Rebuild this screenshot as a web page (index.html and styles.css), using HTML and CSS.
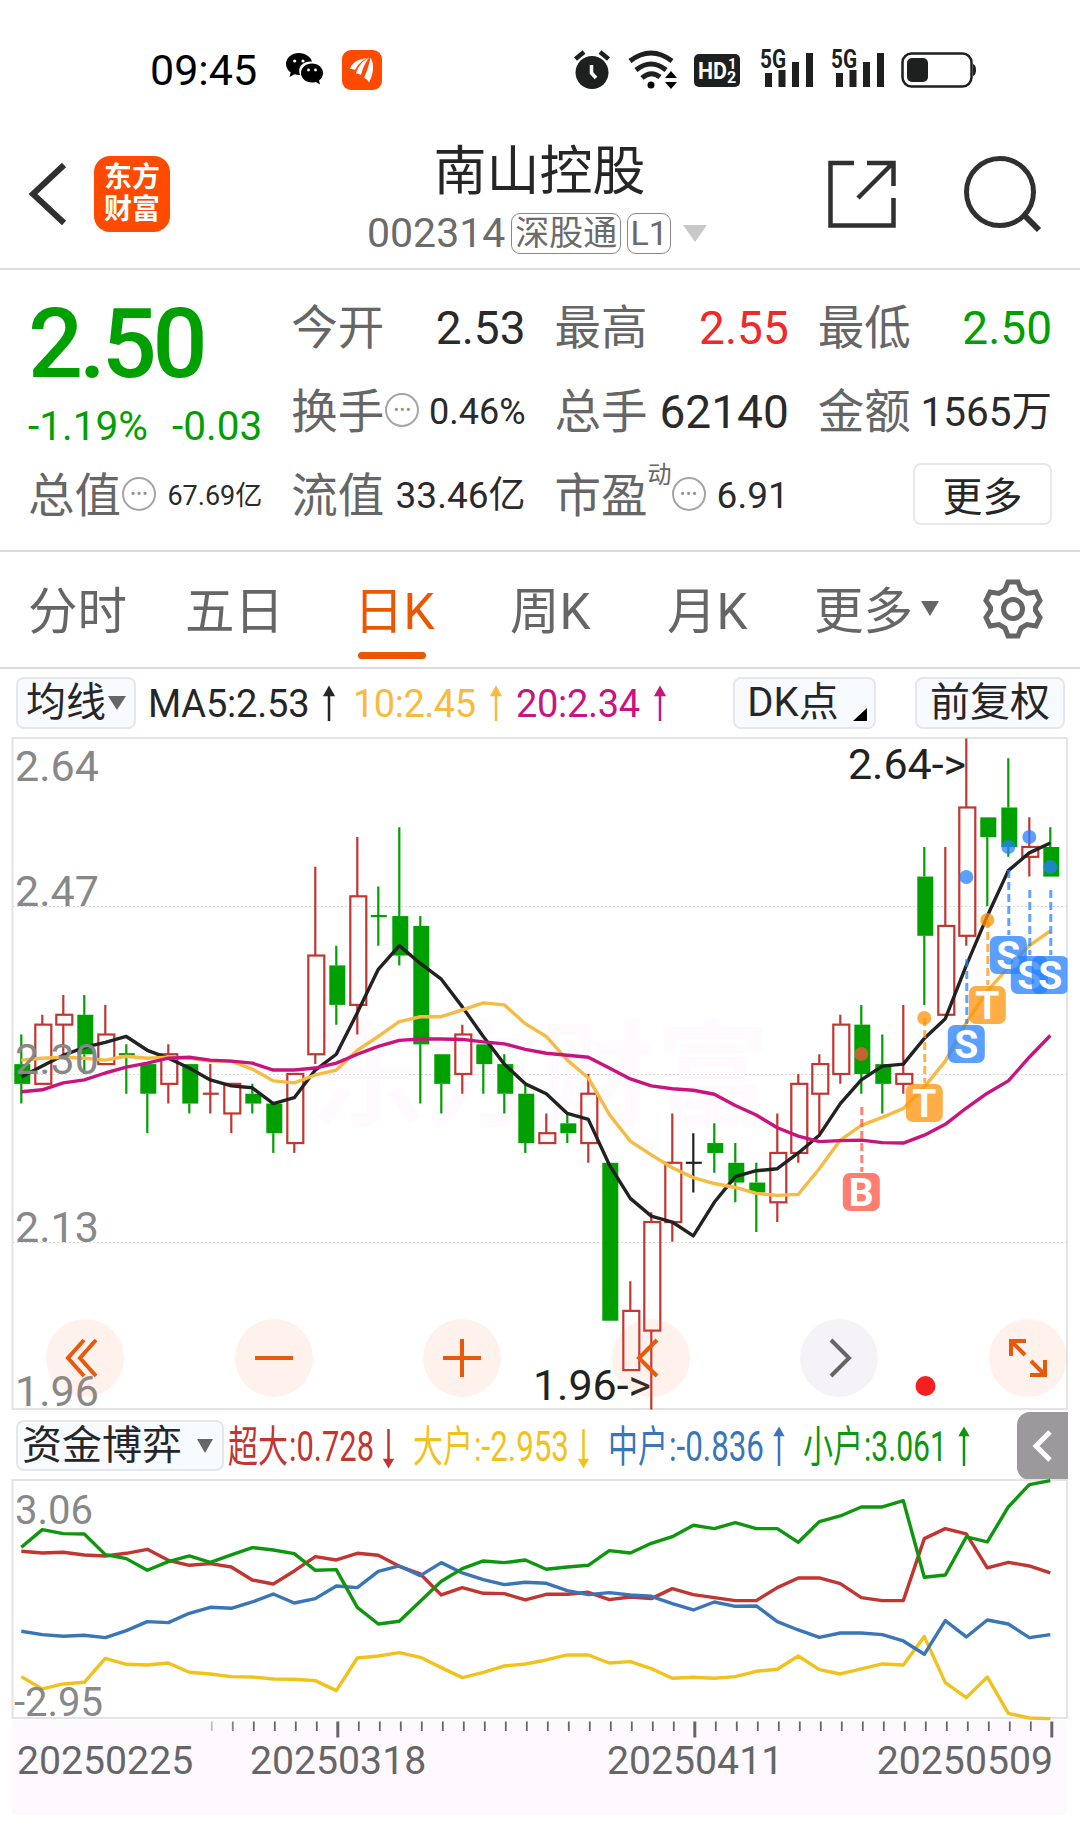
FILE: index.html
```html
<!DOCTYPE html>
<html lang="zh-CN">
<head>
    <meta charset="UTF-8">
    <meta name="viewport" content="width=device-width, initial-scale=1.0">
    <title>南山控股 002314</title>
    <link rel="stylesheet" href="styles.css">
</head>
<body>
    <!-- Status bar -->
    <div class="status-bar">
        <div class="status-left">
            <span class="clock">09:45</span>
            <svg class="wechat" width="38" height="34" viewBox="0 0 38 34">
                <path d="M13 0C5.800 0 0 4.900 0 11c0 3.500 1.800 6.500 4.700 8.500L3.500 24l5-2.700c1.300.4 2.900.6 4.500.6h1C11 14 17 8 26 8.600 24.600 3.500 19.300 0 13 0z"/>
                <path d="M26 10.500c-6.200 0-11 4.200-11 9.500s4.800 9.500 11 9.500c1.400 0 2.700-.2 3.900-.6l4.100 2.600-1-4c2.500-1.700 4-4.400 4-7.500 0-5.300-4.800-9.500-11-9.500z"/>
                <g fill="#fff"><circle cx="8.700" cy="8" r="1.600"/><circle cx="17" cy="8" r="1.600"/><circle cx="22.500" cy="17" r="1.400"/><circle cx="29.500" cy="17" r="1.400"/></g>
            </svg>
            <svg width="40" height="40" viewBox="0 0 40 40">
                <rect width="40" height="40" rx="9" fill="#ff4a00"/>
                <g fill="#fff"><path d="M8 19C10 12 17 9 25 8c-5 3-9 6-12 12-2-1-3-1-5-1z"/><path d="M14 23.500C16 16 21 11 27 7.500c-4 6-6 10-8 17.500-2-1-3-1.500-5-1.500z"/><path d="M22 28C25 21 27 15 28.500 7.500 33 15 31 25 27 32.500c-1-2-2.500-4-5-4.500z"/></g>
            </svg>
        </div>
        <div class="status-right">
            <svg width="36" height="40" viewBox="0 0 36 40">
                <circle cx="18" cy="22.500" r="16.500" fill="#1d201e"/>
                <path d="M1.500 9l8.500-7M34.500 9L26 2" stroke="#1d201e" stroke-width="4.500"/>
                <path d="M17.500 15v8l4.500 5" fill="none" stroke="#fff" stroke-width="3.500"/>
            </svg>
            <svg class="wifi" width="50" height="40" viewBox="0 0 50 40">
                <g fill="none" stroke="#1d201e" stroke-width="5"><path d="M2 11Q23-5 44 11"/><path d="M8 20Q23 8 38 20"/><path d="M14 28Q23 20 32 27"/></g>
                <circle cx="23" cy="35" r="3.500"/>
                <path d="M43 21l6 7H37zM43 39l6-7H37z"/>
            </svg>
            <svg class="hd" width="46" height="33" viewBox="0 0 46 33">
                <rect width="46" height="33" rx="5" fill="#1d201e"/>
                <text x="4" y="25" font-size="24" textLength="29" lengthAdjust="spacingAndGlyphs">HD</text>
                <text x="34" y="15" font-size="15">1</text>
                <text x="33" y="29" font-size="16">2</text>
            </svg>
            <svg class="signal" width="54" height="38" viewBox="0 0 54 38">
                <text x="0" y="19" textLength="26" lengthAdjust="spacingAndGlyphs">5G</text>
                <path d="M5 24h7v14H5zM18.500 21h7v17h-7zM32 13h7v25h-7zM46 4h7v34h-7z"/>
            </svg>
            <svg class="signal signal-2" width="54" height="38" viewBox="0 0 54 38">
                <text x="0" y="19" textLength="26" lengthAdjust="spacingAndGlyphs">5G</text>
                <path d="M5 24h7v14H5zM18.500 21h7v17h-7zM32 13h7v25h-7zM46 4h7v34h-7z"/>
            </svg>
            <svg class="battery" width="76" height="36" viewBox="0 0 76 36">
                <rect x="1.500" y="1.500" width="69" height="33" rx="9" fill="none" stroke="#1d201e" stroke-width="2.500"/>
                <rect x="6" y="6" width="21" height="24" rx="5" fill="#1d201e"/>
                <path d="M72 12q3 1 3 6t-3 6z" fill="#1d201e"/>
            </svg>
        </div>
    </div>

    <!-- Title bar -->
    <div class="header">
        <div class="header-side">
            <svg width="38" height="62" viewBox="0 0 38 62"><path d="M35 2L4 31l31 29" fill="none" stroke="#303030" stroke-width="6"/></svg>
            <div class="brand"><span>东方</span><span>财富</span></div>
        </div>
        <div class="header-title">
            <div class="stock-name">南山控股</div>
            <div class="stock-code">
                <span>002314</span>
                <span class="code-tag">深股通</span>
                <span class="code-tag code-tag-sm">L1</span>
                <svg class="code-arrow" width="24" height="17"><path d="M0 0h24L12 17z" fill="#c8c8c8"/></svg>
            </div>
        </div>
        <div class="header-side header-actions">
            <svg width="68" height="68" viewBox="0 0 68 68"><path d="M26 3H2.500v62.500h63V38M39 3h26.500v23M65 3L30 38" fill="none" stroke="#303030" stroke-width="4.500"/></svg>
            <svg width="78" height="76" viewBox="0 0 78 76"><circle cx="36" cy="36" r="33.500" fill="none" stroke="#303030" stroke-width="5"/><path d="M59 58l16 16" stroke="#303030" stroke-width="6"/></svg>
        </div>
    </div>

    <!-- Quote -->
    <div class="quote">
        <div class="price-box">
            <div class="price">2.50</div>
            <div class="change"><span>-1.19%</span><span>-0.03</span></div>
        </div>
        <div class="cell"><span class="label">今开</span><span class="value">2.53</span></div>
        <div class="cell"><span class="label">最高</span><span class="value up">2.55</span></div>
        <div class="cell"><span class="label">最低</span><span class="value down">2.50</span></div>
        <div class="cell"><span class="label">换手<i class="info">•••</i></span><span class="value v-pct">0.46%</span></div>
        <div class="cell"><span class="label">总手</span><span class="value">62140</span></div>
        <div class="cell"><span class="label">金额</span><span class="value v-lg">1565万</span></div>
        <div class="cell"><span class="label">总值<i class="info">•••</i></span><span class="value v-sm">67.69亿</span></div>
        <div class="cell"><span class="label">流值</span><span class="value v-md">33.46亿</span></div>
        <div class="cell"><span class="label">市盈<sup>动</sup><i class="info">•••</i></span><span class="value v-md">6.91</span></div>
        <div class="cell cell-more"><button class="more-btn">更多</button></div>
    </div>

    <!-- Period tabs -->
    <div class="tabs">
        <span class="tab">分时</span>
        <span class="tab">五日</span>
        <span class="tab active">日K</span>
        <span class="tab">周K</span>
        <span class="tab">月K</span>
        <span class="tab tab-more">更多<svg width="18" height="15"><path d="M0 0h18L9 15z" fill="#666"/></svg></span>
        <svg class="gear" width="58" height="60" viewBox="1 0 58 60">
            <path d="M25 3h10l3 8 6 3.500 9-1.500 4 8.500-4.500 7v3l4.500 7-4 8.500-9-1.500-6 3.500-3 8H25l-3-8-6-3.500-9 1.500-4-8.500 4.500-7v-3L3 21.500 7 13l9 1.500 6-3.500z"/>
            <circle cx="30" cy="30" r="9.500"/>
        </svg>
    </div>

    <!-- Moving averages -->
    <div class="ma-bar">
        <button class="pill pill-ma">均线<svg width="18" height="14"><path d="M0 0h18L9 14z" fill="#666"/></svg></button>
        <span class="ma ma-5">MA5:2.53<svg class="arrow" width="10" height="36"><path d="M5 35V6M1 9L5 2l4 7z"/></svg></span>
        <span class="ma ma-10">10:2.45<svg class="arrow" width="10" height="36"><path d="M5 35V6M1 9L5 2l4 7z"/></svg></span>
        <span class="ma ma-20">20:2.34<svg class="arrow" width="10" height="36"><path d="M5 35V6M1 9L5 2l4 7z"/></svg></span>
        <button class="pill pill-dk">DK点<svg width="14" height="13"><path d="M14 0v13H0z"/></svg></button>
        <button class="pill pill-fq">前复权</button>
    </div>

    <!-- K-line chart -->
    <div class="kline">
        <svg id="kline" width="1080" height="674" viewBox="0 736 1080 674"></svg>
        <div class="tools">
            <span class="tool"><svg width="40" height="40"><path d="M19 2L3 20l16 18M31 2L15 20l16 18"/></svg></span>
            <span class="tool"><svg width="40" height="40"><path d="M1 20h38"/></svg></span>
            <span class="tool"><svg width="40" height="40"><path d="M1 20h38M20 1v38"/></svg></span>
            <span class="tool"><svg width="40" height="40"><path d="M26 2L8 20l18 18"/></svg></span>
            <span class="tool tool-off"><svg width="40" height="40"><path d="M12 2l18 18-18 18"/></svg></span>
            <span class="tool"><svg width="40" height="40"><path d="M18 3H3v15M3 3l14 14M37 22v15H22M37 37L23 23"/></svg></span>
        </div>
    </div>

    <!-- Fund flow -->
    <div class="fund-bar">
        <button class="pill pill-fund">资金博弈<svg width="16" height="14"><path d="M0 0h16L8 14z" fill="#666"/></svg></button>
        <svg class="fund-values" width="790" height="70" viewBox="226 1410 790 70">
            <g fill="#c23531" stroke="#c23531">
                <text x="228" y="1461" textLength="60" lengthAdjust="spacingAndGlyphs">超大</text>
                <text x="289" y="1460" textLength="85" lengthAdjust="spacingAndGlyphs">:0.728</text>
                <path d="M388.500 1428v31M385 1459l3.500 6 3.500-6z"/>
            </g>
            <g fill="#f2c21c" stroke="#f2c21c">
                <text x="413" y="1461" textLength="60" lengthAdjust="spacingAndGlyphs">大户</text>
                <text x="474" y="1460" textLength="95" lengthAdjust="spacingAndGlyphs">:-2.953</text>
                <path d="M583.500 1428v31M580 1459l3.500 6 3.500-6z"/>
            </g>
            <g fill="#3a75b8" stroke="#3a75b8">
                <text x="608" y="1461" textLength="60" lengthAdjust="spacingAndGlyphs">中户</text>
                <text x="669" y="1460" textLength="95" lengthAdjust="spacingAndGlyphs">:-0.836</text>
                <path d="M779 1465v-31M775.500 1434l3.500-6 3.500 6z"/>
            </g>
            <g fill="#0f960f" stroke="#0f960f">
                <text x="803" y="1461" textLength="60" lengthAdjust="spacingAndGlyphs">小户</text>
                <text x="864" y="1460" textLength="83" lengthAdjust="spacingAndGlyphs">:3.061</text>
                <path d="M964 1465v-31M960.500 1434l3.500-6 3.500 6z"/>
            </g>
        </svg>
        <div class="drawer"><svg width="20" height="32"><path d="M17 2L3 16l14 14" fill="none" stroke="#fff" stroke-width="5"/></svg></div>
    </div>
    <svg id="fund" class="fund" width="1080" height="241" viewBox="0 1479 1080 241"></svg>

    <!-- Date axis -->
    <div class="axis">
        <svg id="ticks" width="1055" height="18" viewBox="12 1720 1055 18"></svg>
        <div class="dates"><span>20250225</span><span>20250318</span><span>20250411</span><span>20250509</span></div>
    </div>
    <script src="script.js"></script>
</body>
</html>
```
FILE: styles.css
```css
* {
    box-sizing: border-box;
}

body {
    margin: 0;
    width: 1080px;
    height: 1831px;
    overflow: hidden;
    background: #fff;
    color: #262626;
    font-family: Roboto, "Noto Sans CJK SC", sans-serif;
}

svg {
    display: block;
    flex: none;
    overflow: visible;
}

button {
    font-family: inherit;
    color: inherit;
    padding: 0;
}

/* Status bar */
.status-bar {
    height: 140px;
    padding: 0 103px 0 150px;
    display: flex;
    justify-content: space-between;
    align-items: center;
}

.status-left,
.status-right {
    display: flex;
    align-items: center;
}

.clock {
    width: 136px;
    font-size: 43px;
    line-height: 50px;
    color: #000;
}

.wechat {
    margin-right: 18px;
}

.wifi {
    margin: 0 16px 0 18px;
}

.hd {
    margin-right: 20px;
}

.hd text {
    fill: #fff;
    font-weight: 700;
}

.signal {
    margin: -4px 17px 0 0;
    fill: #1d201e;
}

.signal-2 {
    margin-right: 16px;
}

.signal text {
    font-size: 25px;
    font-weight: 700;
}

/* Header */
.header {
    height: 130px;
    padding: 0 38px 0 29px;
    display: flex;
    justify-content: space-between;
    border-bottom: 2px solid #dcdcdc;
}

.header-side {
    width: 253px;
    height: 108px;
    display: flex;
    align-items: center;
}

.brand {
    width: 76px;
    height: 76px;
    margin-left: 27px;
    border-radius: 16px;
    background: #ff4a00;
    color: #fff;
    font-size: 28px;
    font-weight: 700;
    line-height: 32px;
    display: flex;
    flex-direction: column;
    align-items: center;
    justify-content: center;
}

.header-title {
    width: 345px;
}

.stock-name {
    height: 62px;
    padding-top: 1px;
    font-size: 53px;
    line-height: 62px;
    text-align: center;
}

.stock-code {
    height: 62px;
    display: flex;
    align-items: center;
    color: #6b6b6b;
    font-size: 41px;
    line-height: 46px;
}

.code-tag {
    flex: none;
    width: 110px;
    height: 41px;
    margin-left: 6px;
    border: 1.500px solid #888;
    border-radius: 9px;
    font-size: 34px;
    line-height: 38px;
    text-align: center;
}

.code-tag-sm {
    width: 44px;
}

.code-arrow {
    margin-left: 12px;
}

.header-actions {
    width: 245px;
    justify-content: flex-end;
    gap: 68px;
}

/* Quote */
.quote {
    height: 282px;
    padding: 16px 28px 0;
    display: grid;
    grid-template-columns: repeat(4, 1fr);
    grid-template-rows: repeat(3, 84px);
    column-gap: 29px;
    border-bottom: 2px solid #dcdce0;
}

.price-box {
    grid-row: span 2;
    color: #00a000;
}

.price {
    height: 112px;
    padding-top: 2px;
    font-size: 97px;
    font-weight: 500;
    line-height: 112px;
    letter-spacing: -4.200px;
    white-space: nowrap;
}

.change {
    display: flex;
    justify-content: space-between;
    padding-top: 1px;
    font-size: 40.500px;
    line-height: 54px;
}

.cell {
    display: flex;
    align-items: center;
    justify-content: space-between;
    white-space: nowrap;
}

.label {
    display: flex;
    align-items: center;
    font-size: 46.500px;
    line-height: 60px;
    color: #666;
}

.label sup {
    height: 66px;
    font-size: 24px;
    line-height: 24px;
}

.info {
    width: 34px;
    height: 34px;
    margin: -5px 0 0 1px;
    border: 2.500px solid #a5a5a5;
    border-radius: 50%;
    color: #909090;
    font-size: 15px;
    font-style: normal;
    line-height: 30px;
    letter-spacing: 1px;
    text-indent: 1px;
    text-align: center;
}

.label sup + .info {
    margin-left: 0;
}

.value {
    font-size: 46px;
    line-height: 60px;
    color: #2a2a2a;
}

.value.up {
    color: #ee2a2a;
}

.value.down {
    color: #00a000;
}

.v-lg {
    font-size: 40.500px;
}

.v-md {
    font-size: 37px;
}

.v-pct {
    font-size: 36px;
}

.v-sm {
    font-size: 27px;
}

.cell-more {
    justify-content: flex-end;
}

.more-btn {
    width: 139px;
    height: 62px;
    margin-top: -4px;
    padding-bottom: 5px;
    border: 2px solid #e8e8e8;
    border-radius: 8px;
    background: #fff;
    font-size: 40px;
}

/* Tabs */
.tabs {
    height: 117px;
    padding: 5px 40px 0 28px;
    display: flex;
    align-items: center;
    border-bottom: 2px solid #dcdcdc;
    color: #666;
    font-size: 49.500px;
    line-height: 94px;
}

.tab {
    width: 157px;
    flex: none;
}

.tab:nth-child(2) {
    width: 169px;
}

.tab.active {
    width: 156px;
    color: #eb5600;
}

.tab.active::after {
    content: "";
    display: block;
    width: 68px;
    height: 7px;
    margin: -7px 0 0 4px;
    border-radius: 4px;
    background: #eb5600;
}

.tab-more {
    width: 170px;
    margin-left: -10px;
    display: flex;
    align-items: center;
}

.tab-more svg {
    margin: -7px 0 0 8px;
}

.gear {
    margin: -6px 0 0 auto;
    fill: none;
    stroke: #666;
    stroke-width: 5;
}

/* Toolbar above the chart */
.ma-bar {
    height: 67px;
    padding: 1px 15px 0 16px;
    display: flex;
    align-items: center;
}

.pill {
    flex: none;
    display: flex;
    align-items: center;
    justify-content: center;
    height: 52px;
    border: 2px solid #e4e8ee;
    border-radius: 8px;
    background: #f7faff;
    font-size: 40px;
    line-height: 48px;
    white-space: nowrap;
}

.pill-ma {
    width: 120px;
    margin-right: 12px;
}

.pill-ma svg {
    margin-left: 2px;
}

.ma {
    display: flex;
    align-items: center;
    width: 205px;
    padding-top: 2px;
    font-size: 38px;
    white-space: nowrap;
    letter-spacing: -0.200px;
    fill: currentColor;
}

.arrow {
    margin-left: 15px;
    stroke: currentColor;
    stroke-width: 2.500;
}

.ma-10 {
    width: 163px;
    color: #f8bb40;
    letter-spacing: -0.500px;
}

.ma-20 {
    width: 217px;
    color: #c9147f;
    letter-spacing: -0.300px;
}

.pill-dk {
    width: 143px;
    padding-left: 5px;
}

.pill-dk svg {
    margin: 22px 0 0 14px;
}

.pill-fq {
    width: 150px;
    margin-left: auto;
}

/* K-line */
.kline {
    position: relative;
    height: 674px;
}

.frame {
    fill: none;
    stroke: #e3e3e3;
    stroke-width: 2;
}

.grid-line {
    stroke: #ddd;
    stroke-width: 1;
    stroke-dasharray: 2 2;
}

.watermark {
    font-size: 115px;
    font-weight: 700;
    fill: #fefafe;
}

.scale-text {
    font-size: 43px;
    fill: #888;
}

.peak-text {
    font-size: 43px;
    fill: #222;
}

.line {
    fill: none;
    stroke-width: 3.400;
    stroke-linejoin: round;
}

.badge-text {
    font-size: 39px;
    font-weight: 700;
    fill: #fff;
    text-anchor: middle;
}

/* Floating controls on top of the chart */
.tools {
    position: absolute;
    left: 46px;
    bottom: 13px;
    width: 1021px;
    display: flex;
    justify-content: space-between;
}

.tool {
    width: 78px;
    height: 78px;
    border-radius: 50%;
    background: rgba(255, 115, 70, 0.1);
    display: flex;
    align-items: center;
    justify-content: center;
}

.tool svg {
    fill: none;
    stroke: #e8590c;
    stroke-width: 4;
}

.tool-off {
    background: rgba(90, 50, 120, 0.06);
}

.tool-off svg {
    stroke: #666;
}

/* Fund flow */
.fund-bar {
    height: 69px;
    padding: 2px 12px 0 16px;
    display: flex;
    align-items: center;
}

.pill-fund {
    width: 208px;
    height: 51px;
    margin-right: 2px;
    padding-right: 5px;
}

.pill-fund svg {
    margin-left: 15px;
}

.fund-values text {
    font-size: 43px;
    stroke: none;
}

.fund-values path {
    stroke-width: 2.500;
}

.drawer {
    width: 51px;
    height: 68px;
    margin-left: auto;
    border-radius: 13px 0 0 13px;
    background: #9b999c;
    display: flex;
    align-items: center;
    justify-content: center;
}

.fund .scale-text {
    font-size: 40px;
}

/* Date axis */
.axis {
    width: 1055px;
    height: 95px;
    margin-left: 12px;
    background: #fef9fe;
}

.dates {
    display: flex;
    padding: 0 14px 0 5px;
    color: #666;
    font-size: 39.200px;
    line-height: 46px;
}

.dates span {
    width: 233px;
}

.dates span:nth-child(2) {
    width: 357px;
}

.dates span:last-child {
    width: auto;
    margin-left: auto;
}
```
FILE: script.js
```javascript
// [open, close, high, low] in cents
const candles = [
    [231, 229, 234, 227], [229, 235, 236, 229], [235, 236, 238, 232], [236, 232, 238, 230], [231, 234, 237, 231],
    [232, 232, 233, 228], [231, 228, 231, 224], [229, 232, 233, 227], [231, 227, 231, 226], [228, 228, 231, 226],
    [226, 229, 229, 224], [228, 227, 229, 226], [227, 224, 227, 222], [223, 230, 230, 222], [232, 242, 251, 231],
    [241, 237, 243, 235], [237, 248, 254, 234], [246, 246, 249, 243], [246, 242, 255, 241], [245, 233, 246, 227],
    [232, 229, 232, 226], [230, 234, 235, 228], [233, 231, 233, 228], [231, 228, 232, 226], [228, 223, 229, 222],
    [223, 224, 226, 223], [225, 224, 226, 223], [223, 228, 230, 221], [221, 205, 221, 205], [200, 206, 209, 200],
    [204, 215, 216, 196], [215, 221, 226, 213], [221, 221, 224, 218], [223, 222, 225, 220], [221, 219, 223, 217],
    [219, 218, 221, 214], [217, 222, 226, 215], [222, 229, 230, 221], [228, 231, 232, 224], [230, 235, 236, 229],
    [235, 230, 237, 228], [231, 229, 234, 226], [229, 230, 237, 228], [250, 244, 253, 237], [236, 245, 253, 236],
    [244, 257, 264, 243], [256, 254, 256, 247], [257, 253, 262, 252], [252, 253, 256, 250], [253, 250, 255, 250]
];

// averages for the days before the window is full
const seed = {
    5: [229.7, 230.8, 231.9, 232.7],
    10: [231.4, 231.6, 231.7, 231.6, 231.4, 231.8, 231.6, 231.7, 231.6],
    20: [228.2, 228.4, 229.1, 229.4, 230.1, 230.7, 231.1, 231.6, 231.7, 231.4, 231.3, 231.1, 230.4, 230.4, 230.6, 231.1, 232, 232.8, 233.4]
};

// fund curves, in thirds of a pixel
const funds = {
    '#c23531': [243, 248, 246, 254, 257, 249, 237, 270, 285, 280, 290, 329, 341, 302, 259, 269, 249, 255, 288, 311, 374, 352, 369, 370, 389, 372, 372, 366, 388, 380, 385, 355, 373, 382, 391, 391, 352, 323, 323, 340, 382, 391, 391, 205, 175, 191, 293, 276, 287, 308],
    '#f2c21c': [619, 656, 641, 636, 564, 582, 584, 578, 606, 611, 619, 620, 626, 627, 631, 661, 563, 557, 547, 561, 592, 622, 606, 587, 581, 569, 554, 554, 578, 574, 595, 624, 621, 624, 619, 603, 597, 557, 598, 611, 596, 581, 584, 499, 637, 682, 620, 729, 743, 745],
    '#3a75b8': [483, 493, 498, 495, 502, 481, 454, 457, 429, 411, 414, 395, 371, 398, 385, 347, 352, 303, 287, 316, 277, 308, 328, 343, 336, 339, 361, 373, 367, 374, 378, 400, 419, 395, 408, 407, 454, 479, 501, 488, 488, 493, 512, 552, 451, 500, 449, 461, 502, 493],
    '#0f960f': [231, 178, 190, 191, 253, 265, 300, 274, 257, 276, 254, 232, 239, 250, 300, 298, 411, 461, 453, 393, 333, 295, 272, 277, 269, 297, 290, 285, 241, 248, 219, 199, 165, 175, 157, 175, 175, 216, 154, 137, 110, 110, 91, 321, 314, 200, 215, 110, 43, 31]
};

// trade marks: day, letter, colour, dot y, dash start, badge centre y
const marks = [
    [40, 'B', '#ff5340', 1054, 1107, 1192],
    [43, 'T', '#ff930a', 1018, 1018, 1103],
    [46, 'T', '#ff930a', 920, 920, 1005],
    [45, 'S', '#2680ff', 877, 959, 1044],
    [47, 'S', '#2680ff', 847, 870, 955],
    [48, 'S', '#2680ff', 837, 890, 975],
    [49, 'S', '#2680ff', 867, 890, 975]
];

const x = i => 21.3 + i * 21;
const y = p => 738.4 + (264 - p) * 9.87;

function polyline(points, color) {
    return `<polyline class="line" stroke="${color}" points="${points.map((v, i) => x(i) + ',' + v).join(' ')}"/>`;
}

function average(n) {
    return candles.map((c, i) => {
        if (i < n - 1) return y(seed[n][i]);
        const part = candles.slice(i - n + 1, i + 1);
        return y(part.reduce((sum, k) => sum + k[1], 0) / n);
    });
}

function drawCandle([open, close, high, low], i) {
    const cx = x(i);
    const top = y(Math.max(open, close));
    const bottom = y(Math.min(open, close));
    let color = close > open ? '#c23531' : '#00a000';
    if (i === 9) color = '#c23531';
    if (i === 32) color = '#222';
    let out = `<path d="M${cx} ${y(high)}V${top}M${cx} ${bottom}V${y(low)}" stroke="${color}" stroke-width="2.2"/>`;
    if (open === close) {
        out += `<path d="M${cx - 7.500} ${top}h16" stroke="${color}" stroke-width="2.200"/>`;
    } else if (close > open) {
        out += `<rect x="${cx - 7}" y="${top}" width="16" height="${bottom - top}" fill="none" stroke="${color}" stroke-width="2.200"/>`;
    } else {
        out += `<rect x="${cx - 7}" y="${top}" width="16" height="${bottom - top}" fill="${color}"/>`;
    }
    return out;
}

function drawMark([i, letter, color, dot, dash, badge]) {
    const cx = x(i);
    return `<g>
        <circle cx="${cx}" cy="${dot}" r="7" fill="${color}" fill-opacity="0.75"/>
        <path d="M${cx + 0.5} ${dash}V${badge - 20}" stroke="${color}" stroke-opacity="0.72" stroke-width="3" stroke-dasharray="8 4"/>
        <rect x="${cx - 18.500}" y="${badge - 19}" width="37" height="38" rx="7" fill="${color}" fill-opacity="0.75"/>
        <text class="badge-text" x="${cx}" y="${badge + 14}">${letter}</text>
    </g>`;
}

let k = '<clipPath id="plot"><rect x="12" y="736" width="1055.500" height="674"/></clipPath>';
k += '<text class="watermark" x="310" y="1117">东方财富</text>';
k += '<rect class="frame" x="12.500" y="738" width="1054.500" height="671"/>';
[247, 230, 213].forEach(p => {
    k += `<path class="grid-line" d="M13 ${Math.round(y(p)) + 0.5}H1067"/>`;
});
k += candles.map(drawCandle).join('');
k += polyline(average(5), '#222');
k += polyline(average(10), '#f5bb45');
k += polyline(average(20), '#c9147f');
k += [[2.64, 781], [2.47, 905.5], ['2.30', 1073.5], [2.13, 1242], [1.96, 1405.5]]
    .map(([t, ty]) => `<text class="scale-text" x="15" y="${ty}">${t}</text>`).join('');
k += '<text class="peak-text" x="848" y="779" textLength="118">2.64-&gt;</text>';
k += '<text class="peak-text" x="533" y="1400" textLength="118">1.96-&gt;</text>';
k += `<g clip-path="url(#plot)">${marks.map(drawMark).join('')}</g>`;
k += '<circle cx="925.500" cy="1386" r="10" fill="#f52020"/>';
document.getElementById('kline').innerHTML = k;

let f = '<rect class="frame" x="12.500" y="1480" width="1054.500" height="238"/>';
f += Object.keys(funds).map(c => polyline(funds[c].map(v => 1470.3 + v / 3), c)).join('');
f += '<text class="scale-text" x="15" y="1524">3.06</text><text class="scale-text" x="14" y="1716">-2.95</text>';
document.getElementById('fund').innerHTML = f;

let t = '';
for (let i = 9; i < candles.length; i++) {
    const major = i === 15 || i === 32 || i === 49;
    t += `<path d="M${x(i) + 1.5} 1721.500v${major ? 16 : 9.500}" stroke="#666" stroke-width="${major ? 3 : 1.800}" opacity="${i < 11 ? (i - 8) * 0.4 : 1}"/>`;
}
document.getElementById('ticks').innerHTML = t;
```
